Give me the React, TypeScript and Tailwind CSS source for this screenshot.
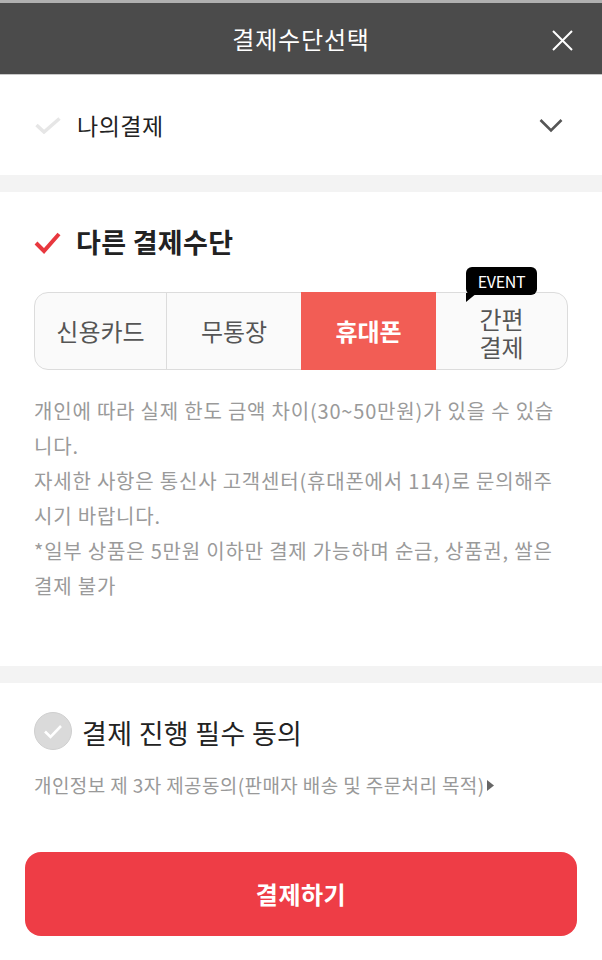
import React from "react";

const font = { fontFamily: '"Noto Sans CJK KR", "Noto Sans", sans-serif' };

export default function App() {
  return (
    <div className="w-[602px] h-[960px] bg-white flex flex-col" style={font}>
      {/* header */}
      <div className="h-[3px] bg-[#b0b0b0]" />
      <div className="h-[72px] bg-[#4b4b4b] relative flex items-center justify-center border-b border-[#c8c8c8]">
        <span className="text-white text-[24px] tracking-[0.8px]">결제수단선택</span>
        <svg className="absolute right-[29px] top-[27px]" width="21" height="21" viewBox="0 0 21 21">
          <path d="M1 1 L20 20 M20 1 L1 20" stroke="#ffffff" strokeWidth="2" />
        </svg>
      </div>

      {/* my payment */}
      <div className="h-[100px] flex items-center px-[35px]">
        <svg width="26" height="17" viewBox="0 0 26 17">
          <path d="M1.5 8 L9 15 L24.5 1.5" stroke="#e6e6e6" strokeWidth="3.5" fill="none" />
        </svg>
        <span className="ml-[16px] text-[23px] tracking-[0.5px] text-[#222]">나의결제</span>
        <svg className="ml-auto mr-[4px]" width="24" height="15" viewBox="0 0 24 15">
          <path d="M1.5 2 L12 12.5 L22.5 2" stroke="#555" strokeWidth="2.6" fill="none" />
        </svg>
      </div>

      <div className="h-[17px] bg-[#f3f3f3]" />

      {/* other payment */}
      <div className="h-[474px] px-[34px] pt-[32px]">
        <div className="flex items-center h-[36px]">
          <svg width="27" height="23" viewBox="0 0 27 23">
            <path d="M2 12 L10 20 L25 3" stroke="#e8383f" strokeWidth="4" fill="none" />
          </svg>
          <span className="ml-[15px] text-[27px] font-bold tracking-[0.3px] text-[#222]">다른 결제수단</span>
        </div>

        <div className="relative mt-[32px] h-[78px] rounded-[14px] border border-[#dcdcdc] bg-[#fafafa] flex">
          <div className="w-[132px] flex items-center justify-center border-r border-[#dcdcdc] text-[24px] text-[#555]">
            신용카드
          </div>
          <div className="w-[134px] flex items-center justify-center text-[24px] text-[#555]">
            무통장
          </div>
          <div className="w-[135px] -my-px bg-[#f25d55] flex items-center justify-center text-[24px] font-bold text-white">
            휴대폰
          </div>
          <div className="flex-1 flex items-center justify-center pt-[4px]">
            <p className="text-center text-[24px] leading-[28px] text-[#555]">
              간편
              <br />
              결제
            </p>
          </div>
          <div className="absolute left-[431px] top-[-26px] w-[71px] h-[28px] bg-black rounded-[6px] flex items-center justify-center text-white text-[16px] leading-none tracking-[-0.3px]">
            EVENT
            <svg className="absolute left-0 bottom-[-8px]" width="11" height="10" viewBox="0 0 11 10">
              <path d="M0 0 L11 0 L0 9 Z" fill="#000" />
            </svg>
          </div>
        </div>

        <div className="mt-[23px] text-[20px] leading-[35px] text-[#9a9a9a] tracking-[0.8px] whitespace-nowrap">
          <p>개인에 따라 실제 한도 금액 차이(30~50만원)가 있을 수 있습</p>
          <p>니다.</p>
          <p>자세한 사항은 통신사 고객센터(휴대폰에서 114)로 문의해주</p>
          <p>시기 바랍니다.</p>
          <p>*일부 상품은 5만원 이하만 결제 가능하며 순금, 상품권, 쌀은</p>
          <p>결제 불가</p>
        </div>
      </div>

      <div className="h-[17px] bg-[#f3f3f3]" />

      {/* agreement */}
      <div className="px-[34px] pt-[28px]">
        <div className="flex items-center h-[40px]">
          <div className="w-[38px] h-[38px] rounded-full bg-[#dadada] border border-[#cfcfcf] flex items-center justify-center">
            <svg width="20" height="15" viewBox="0 0 20 15">
              <path d="M2 7.5 L7.5 13 L18 2" stroke="#ffffff" strokeWidth="2.6" fill="none" />
            </svg>
          </div>
          <span className="ml-[10px] mt-[4px] text-[27px] tracking-[0.3px] text-[#222]">결제 진행 필수 동의</span>
        </div>
        <div className="mt-[22px] flex items-center text-[19px] leading-[24px] tracking-[0.4px] text-[#999]">
          <span>개인정보 제 3자 제공동의(판매자 배송 및 주문처리 목적)</span>
          <svg className="ml-[2px]" width="7" height="11" viewBox="0 0 7 11">
            <path d="M0 0 L7 5.5 L0 11 Z" fill="#666" />
          </svg>
        </div>
      </div>

      <div className="px-[25px] mt-[55px]">
        <button className="w-full h-[84px] rounded-[16px] bg-[#ee3d46] text-white text-[24px] font-bold tracking-[0.5px]">
          결제하기
        </button>
      </div>
    </div>
  );
}
